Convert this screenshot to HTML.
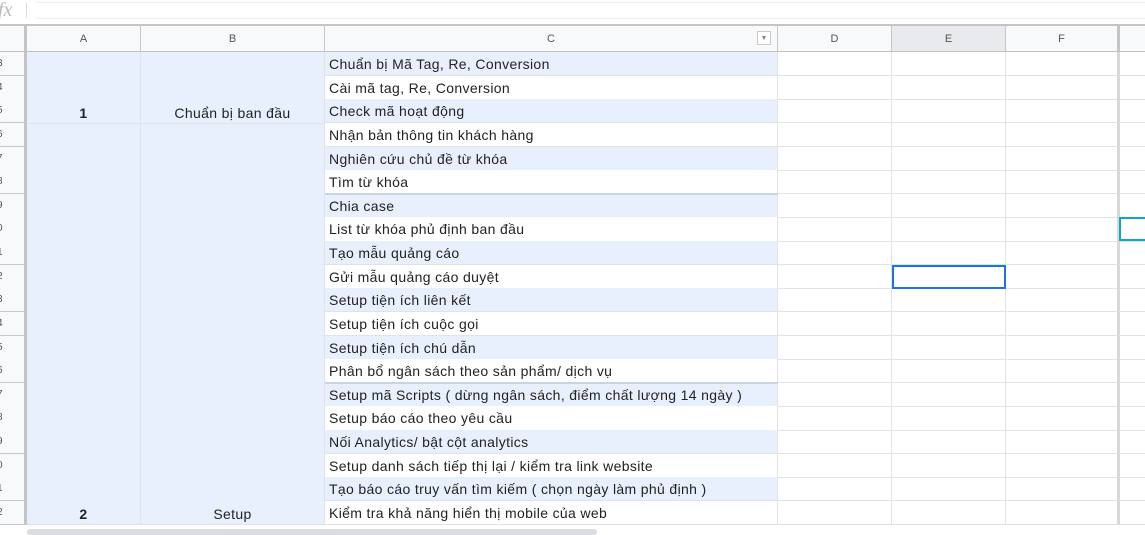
<!DOCTYPE html>
<html><head><meta charset="utf-8"><style>
*{margin:0;padding:0;box-sizing:border-box}
body{width:1145px;height:535px;overflow:hidden;background:#fff;font-family:"Liberation Sans",Arial,sans-serif;position:relative}
.a{position:absolute}
.c{position:absolute;font-size:14px;color:#222;white-space:nowrap;overflow:hidden;border-bottom:1px solid #e2e3e3;border-right:1px solid #e2e3e3;letter-spacing:0.35px}
.h{position:absolute;top:26px;height:26px;background:#f8f9fa;border-right:1px solid #c8c8c8;border-bottom:1px solid #c0c0c0;font-size:11px;color:#555;text-align:center;line-height:27px}
.rn{position:absolute;left:0;width:27px;background:#f8f9fa;border-bottom:1px solid #c8c8c8;border-right:3px solid #c4c4c4;font-size:10px;color:#555;overflow:hidden}
</style></head><body>
<div class="a" style="left:0;top:0;width:1145px;height:24px;background:#fff"></div>
<div class="a" style="left:-2px;top:-1px;font-family:'Liberation Serif',serif;font-style:italic;font-size:20px;color:#bbb">fx</div>
<div class="a" style="left:26px;top:3px;width:1px;height:15px;background:#ddd"></div>
<div class="a" style="left:37px;top:2px;width:1108px;height:17px;background:#fff;border-top:1px solid #f0f0f0;border-bottom:1px solid #f0f0f0"></div>
<div class="a" style="left:0;top:24px;width:1145px;height:2px;background:#c4c4c4"></div>
<div class="h" style="left:0;width:27px;border-right:3px solid #c4c4c4"></div>
<div class="h" style="left:27px;width:114px">A</div>
<div class="h" style="left:141px;width:184px">B</div>
<div class="h" style="left:325px;width:453px">C<div class="a" style="left:432px;top:5px;width:14px;height:14px;border:1px solid #ccc;font-size:7px;line-height:13px;color:#888;background:#fff">▼</div></div>
<div class="h" style="left:778px;width:114px">D</div>
<div class="h" style="left:892px;width:114px;background:#e8eaed">E</div>
<div class="h" style="left:1006px;width:114px;border-right:3px solid #c4c4c4">F</div>
<div class="h" style="left:1120px;width:30px"></div>
<div id="g"></div>
<script>
var t=["Chuẩn bị Mã Tag, Re, Conversion","Cài mã tag, Re, Conversion","Check mã hoạt động","Nhận bản thông tin khách hàng","Nghiên cứu chủ đề từ khóa","Tìm từ khóa","Chia case","List từ khóa phủ định ban đầu","Tạo mẫu quảng cáo","Gửi mẫu quảng cáo duyệt","Setup tiện ích liên kết","Setup tiện ích cuộc gọi","Setup tiện ích chú dẫn","Phân bổ ngân sách theo sản phẩm/ dịch vụ","Setup mã Scripts ( dừng ngân sách, điểm chất lượng 14 ngày )","Setup báo cáo theo yêu cầu","Nối Analytics/ bật cột analytics","Setup danh sách tiếp thị lại / kiểm tra link website","Tạo báo cáo truy vấn tìm kiếm ( chọn ngày làm phủ định )","Kiểm tra khả năng hiển thị mobile của web"];
var h="",R=23.63;
for(var i=0;i<20;i++){var y=52+i*R,n=i+3,bg=(i%2==0)?"#e8f0fe":"#fff";
h+='<div class="rn" style="top:'+y+'px;height:'+(R+0.5)+'px;line-height:'+R+'px"><span style="position:absolute;left:-3px">'+(n%10)+'</span></div>';
h+='<div class="c" style="left:325px;top:'+y+'px;width:453px;height:'+(R+0.5)+'px;line-height:'+(R+2)+'px;padding-left:4px;background:'+bg+'">'+t[i]+'</div>';
var xs=[778,892,1006,1120],ws=[114,114,114,30];
for(var j=0;j<4;j++)h+='<div class="c" style="left:'+xs[j]+'px;top:'+y+'px;width:'+ws[j]+'px;height:'+(R+0.5)+'px;'+(j==2?'border-right:3px solid #d8d8d8':'')+'"></div>';}
function m(top,bot,x,w,txt,bold){return '<div class="c" style="left:'+x+'px;top:'+top+'px;width:'+w+'px;height:'+(bot-top)+'px;background:#e8f0fe;text-align:center;'+(bold?'font-weight:bold;':'')+'"><span style="position:absolute;left:0;right:0;bottom:2px">'+txt+'</span></div>';}
h+=m(52,123.5,27,114,"1",1)+m(52,123.5,141,184,"Chuẩn bị ban đầu",0)+m(123.5,525,27,114,"2",1)+m(123.5,525,141,184,"Setup",0);
document.getElementById("g").innerHTML=h;
</script>
<div class="a" style="left:325px;top:193px;width:453px;height:2px;background:#c9d3e3"></div>
<div class="a" style="left:325px;top:382px;width:453px;height:2px;background:#c9d3e3"></div>
<div class="a" style="left:892px;top:265px;width:114px;height:24px;border:2px solid #1a73e8"></div>
<div class="a" style="left:1119px;top:217px;width:30px;height:24px;border:2px solid #12a4c4"></div>
<div class="a" style="left:0;top:526px;width:1145px;height:9px;background:#fff"></div>
<div class="a" style="left:27px;top:529px;width:570px;height:6px;background:#dadce0;border-radius:3px"></div>
</body></html>
